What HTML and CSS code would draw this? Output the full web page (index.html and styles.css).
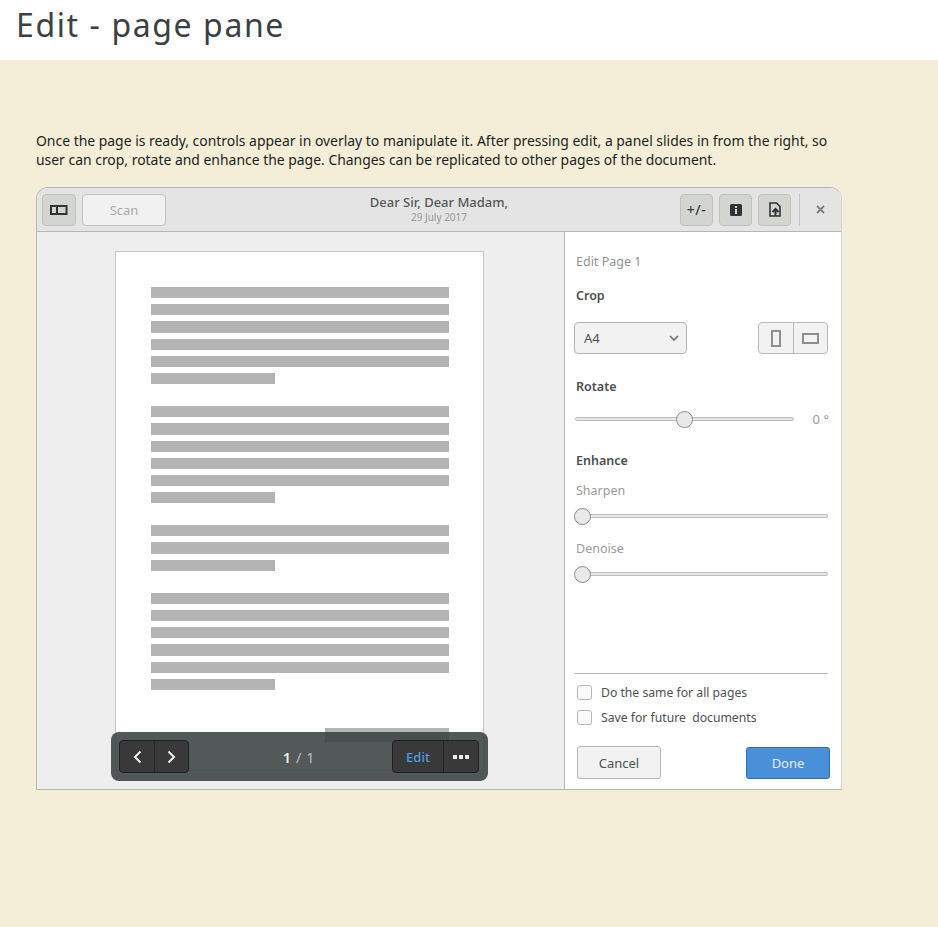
FILE: index.html
```html
<!DOCTYPE html>
<html lang="en">
<head>
	<meta charset="UTF-8">
	<title>Edit - page pane</title>
	<link rel="stylesheet" href="styles.css">
</head>
<body>
	<div class="top"><h1>Edit - page pane</h1></div>
	<div class="content">
		<p class="intro">Once the page is ready, controls appear in overlay to manipulate it. After pressing edit, a panel slides in from the right, so user can crop, rotate and enhance the page. Changes can be replicated to other pages of the document.</p>

		<div class="window">
			<div class="titlebar">
				<div class="tb-left">
					<div class="btn toggled">
						<svg width="18" height="12" viewBox="0 0 18 12"><path d="M1 2h15.500v8H1zM7 2v8" fill="none" stroke="#2e3436" stroke-width="2"/></svg>
					</div>
					<div class="btn scan">Scan</div>
				</div>
				<div class="tb-title">
					<div class="doc-name">Dear Sir, Dear Madam,</div>
					<div class="doc-date">29 July 2017</div>
				</div>
				<div class="tb-right">
					<div class="btn narrow toggled plusminus">+/-</div>
					<div class="btn narrow toggled">
						<svg width="12" height="12" viewBox="0 0 12 12"><path fill-rule="evenodd" d="M1.500 0h9A1.500 1.500 0 0 1 12 1.500v9a1.500 1.500 0 0 1-1.500 1.500h-9A1.500 1.500 0 0 1 0 10.500v-9A1.500 1.500 0 0 1 1.500 0zM5 2v2h2V2zM5 5v5h2V5z" fill="#2e3436"/></svg>
					</div>
					<div class="btn narrow toggled">
						<svg width="12" height="15" viewBox="0 0 12 15"><path d="M1 1h6.500L11 4.500V14H1z" fill="none" stroke="#2e3436" stroke-width="1.600"/><path d="M6.500 14V8.500M3.500 10L6.500 7l3 3" fill="none" stroke="#2e3436" stroke-width="2"/></svg>
					</div>
					<span class="tb-sep"></span>
					<svg class="close" width="9" height="9" viewBox="0 0 9 9"><path d="M1 1l7 7M8 1L1 8" stroke="#7b7f7f" stroke-width="1.800"/></svg>
				</div>
			</div>

			<div class="body">
				<div class="pane">
					<div class="page">
						<div class="para">
							<div class="line"></div><div class="line"></div><div class="line"></div><div class="line"></div><div class="line"></div><div class="line short"></div>
						</div>
						<div class="para">
							<div class="line"></div><div class="line"></div><div class="line"></div><div class="line"></div><div class="line"></div><div class="line short"></div>
						</div>
						<div class="para">
							<div class="line"></div><div class="line"></div><div class="line short"></div>
						</div>
						<div class="para">
							<div class="line"></div><div class="line"></div><div class="line"></div><div class="line"></div><div class="line"></div><div class="line short"></div>
						</div>
						<div class="para last">
							<div class="line sign"></div>
						</div>
					</div>

					<div class="overlay">
						<div class="group">
							<div class="obtn nav">
								<svg width="9" height="14" viewBox="0 0 9 14"><path d="M7.500 1.500L2 7l5.500 5.500" fill="none" stroke="#eeeeec" stroke-width="2"/></svg>
							</div>
							<div class="obtn nav">
								<svg width="9" height="14" viewBox="0 0 9 14"><path d="M1.500 1.500L7 7l-5.500 5.500" fill="none" stroke="#eeeeec" stroke-width="2"/></svg>
							</div>
						</div>
						<div class="count"><b>1</b> / 1</div>
						<div class="group right">
							<div class="obtn edit">Edit</div>
							<div class="obtn more"><i></i><i></i><i></i></div>
						</div>
					</div>
				</div>

				<div class="side">
					<div class="side-title">Edit Page 1</div>
					<div class="head crop-head">Crop</div>
					<div class="crop-row">
						<div class="select">A4
							<svg width="10" height="6" viewBox="0 0 10 6"><path d="M1 1l4 4 4-4" fill="none" stroke="#6b6f6f" stroke-width="1.600"/></svg>
						</div>
						<div class="linked">
							<div class="lbtn"><span class="portrait"></span></div>
							<div class="lbtn"><span class="landscape"></span></div>
						</div>
					</div>
					<div class="head rotate-head">Rotate</div>
					<div class="rotate-row">
						<div class="slider rotate"><span class="thumb"></span></div>
						<span class="deg">0 °</span>
					</div>
					<div class="head enhance-head">Enhance</div>
					<div class="sub sharpen">Sharpen</div>
					<div class="slider full"><span class="thumb start"></span></div>
					<div class="sub denoise">Denoise</div>
					<div class="slider full"><span class="thumb start"></span></div>

					<div class="side-foot">
						<div class="check"><span class="box"></span>Do the same for all pages</div>
						<div class="check"><span class="box"></span>Save for future&nbsp; documents</div>
						<div class="actions">
							<div class="act cancel">Cancel</div>
							<div class="act done">Done</div>
						</div>
					</div>
				</div>
			</div>
		</div>
	</div>
</body>
</html>
```

FILE: styles.css
```css
*{padding: 0;margin: 0;box-sizing: border-box;}
html,body{height: 100%;}
body{font-family: "Noto Sans", sans-serif;background: #f4edd8;color: #2e3436;display: flex;flex-direction: column;}

.top{height: 60px;background: #fff;padding: 0 16px;flex: none;}
.top h1{font-size: 32px;font-weight: 400;line-height: 50px;letter-spacing: 1.600px;color: #3b4143;}

.content{flex: 1;padding: 71px 36px 0;}
.intro{width: 800px;font-size: 13.930px;line-height: 19px;color: #1c1f20;}

/* window */
.window{width: 806px;height: 603px;margin-top: 18px;border: 1px solid #b6b6b3;border-right-color: #d6d6cc;border-radius: 12px 12px 0 0;display: flex;flex-direction: column;overflow: hidden;background: #fff;}
.titlebar{height: 44px;flex: none;display: grid;grid-template-columns: 1fr auto 1fr;align-items: center;padding: 0 5px;background: #e4e4e4;border-bottom: 1px solid #b6b6b3;}
.tb-left,.tb-right{display: flex;align-items: center;gap: 6px;}
.tb-right{justify-content: flex-end;}
.btn{width: 34px;height: 32px;border: 1px solid #c0c2bc;border-radius: 4px;display: flex;align-items: center;justify-content: center;font-size: 13px;}
.narrow{width: 33px;}
.toggled{background: #d3d6d0;}
.scan{width: 84px;background: #f1f1f1;color: #a9abab;}
.plusminus{font-size: 14px;font-weight: 500;color: #3a3f40;letter-spacing: .5px;}
.tb-title{text-align: center;margin-top: -2px;}
.doc-name{font-size: 13px;line-height: 17px;font-weight: 500;color: #54585a;}
.doc-date{font-size: 10px;line-height: 14px;margin-top: -1px;color: #96999a;}
.tb-sep{width: 1px;height: 32px;background: #c4c4c2;margin-left: 2px;}
.close{margin: 0 11px 0 10px;}

.body{flex: 1;display: flex;min-height: 0;}

/* page pane */
.pane{width: 528px;flex: none;position: relative;background: #eeeeee;border-right: 1px solid #b6b6b3;overflow: hidden;}
.page{width: 369px;height: 520px;margin: 19px 0 0 78px;padding: 35px 34px 0 35px;background: #fff;border: 1px solid #c8c8c6;}
.para{display: flex;flex-direction: column;gap: 6px;margin-bottom: 22px;}
.para.last{margin-top: 38px;align-items: flex-end;}
.line{height: 11.200px;background: #b4b4b4;}
.short{width: 124px;}
.sign{width: 124px;height: 14px;}

.overlay{position: absolute;left: 74px;bottom: 8px;width: 377px;height: 49px;padding: 0 9px 0 8px;border-radius: 8px;background: rgba(57,63,63,.87);display: grid;grid-template-columns: 1fr auto 1fr;align-items: center;}
.group{display: flex;height: 33px;width: fit-content;border: 1px solid #1f2222;border-radius: 4px;background: #393939;}
.group.right{justify-self: end;}
.obtn{display: flex;align-items: center;justify-content: center;font-size: 13px;}
.obtn + .obtn{border-left: 1px solid #232626;}
.nav{width: 34px;}
.edit{width: 50px;color: #5199e4;font-weight: 500;}
.more{width: 35px;gap: 2px;}
.more i{width: 4px;height: 4px;background: #eeeeec;}
.count{font-size: 14.500px;letter-spacing: .6px;color: #b9bbbb;}
.count b{font-weight: 600;color: #eeeeec;}

/* edit side */
.side{flex: 1;display: flex;flex-direction: column;padding: 0 13px 10px 9px;background: #fff;font-size: 13px;}
.side-title{margin: 21px 0 0 2px;line-height: 18px;font-size: 12.500px;color: #8f9393;}
.head{margin-left: 2px;line-height: 18px;font-size: 12.500px;font-weight: 600;color: #4b4f50;}
.crop-head{margin-top: 16px;}
.crop-row{display: flex;justify-content: space-between;margin-top: 17px;}
.select{width: 113px;height: 32px;padding: 0 7px 0 9px;border: 1px solid #b3b5b3;border-radius: 4px;background: #f2f2f2;display: flex;align-items: center;justify-content: space-between;color: #4d5152;}
.linked{display: flex;height: 32px;width: 70px;border: 1px solid #b9bbb9;border-radius: 4px;background: #f2f2f2;}
.lbtn{flex: 1;display: flex;align-items: center;justify-content: center;}
.lbtn + .lbtn{border-left: 1px solid #b9bbb9;}
.portrait{width: 10px;height: 17px;border: 2px solid #8b8f8f;}
.landscape{width: 17px;height: 11px;border: 2px solid #8b8f8f;}
.rotate-head{margin-top: 24px;}
.rotate-row{display: flex;align-items: center;justify-content: space-between;margin-top: 13px;height: 20px;}
.slider{height: 4px;border: 1px solid #bbbdbb;border-radius: 2px;background: #e8e8e8;display: flex;align-items: center;margin-left: 1px;}
.rotate{width: 219px;}
.full{width: 253px;margin-top: 14px;}
.thumb{width: 17px;height: 17px;flex: none;border: 1px solid #888c8c;border-radius: 50%;background: #e9e9e7;margin-left: 100px;}
.thumb.start{margin-left: -2px;}
.deg{font-size: 13px;color: #9a9d9d;margin-right: -1px;}
.enhance-head{margin-top: 23px;}
.sub{margin: 0 0 0 2px;line-height: 18px;font-size: 12.500px;color: #9a9d9d;}
.sharpen{margin-top: 12px;}
.denoise{margin: 22px 0 0 2px;}

.side-foot{margin-top: auto;border-top: 1px solid #b9bbb9;padding-top: 1px;}
.check{display: flex;align-items: center;height: 15px;margin: 10px 0 0 3px;font-size: 12.200px;color: #4d5152;}
.box{width: 15px;height: 15px;margin-right: 9px;border: 1px solid #b5b7b5;border-radius: 3px;background: #fbfbfb;flex: none;}
.actions{display: flex;justify-content: space-between;margin: 21px -2px 0 3px;align-items: flex-end;}
.act{width: 84px;display: flex;align-items: center;justify-content: center;border-radius: 3px;font-size: 13px;}
.cancel{height: 33px;border: 1px solid #b5b7b5;background: #f2f2f2;color: #4d5152;}
.done{height: 32px;border: 1px solid #2f6fb0;background: #4a90d9;color: #e4eefa;}
```
